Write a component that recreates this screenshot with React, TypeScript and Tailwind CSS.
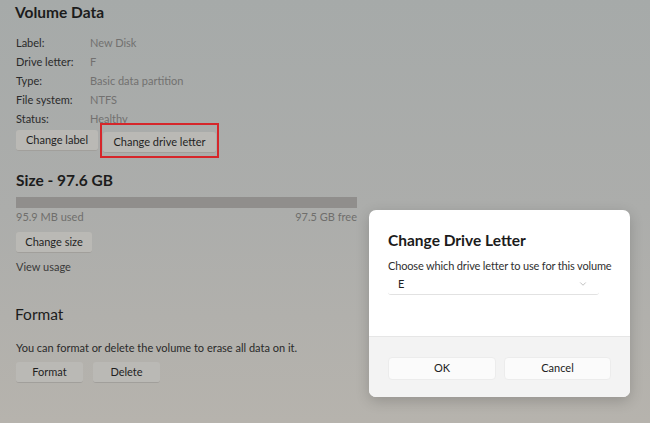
import { ChevronDown } from 'lucide-react'

const rows = [
  ['Label:', 'New Disk'],
  ['Drive letter:', 'F'],
  ['Type:', 'Basic data partition'],
  ['File system:', 'NTFS'],
  ['Status:', 'Healthy'],
]

function GhostButton({ children, className = '' }: { children: React.ReactNode; className?: string }) {
  return (
    <button
      className={`h-[21px] rounded-[3px] border-b border-[#a19f9b] bg-[#bab9b5] text-[11px] text-[#1f1f1f] ${className}`}
    >
      {children}
    </button>
  )
}

export default function App() {
  return (
    <div
      className="relative h-[423px] w-[650px] overflow-hidden bg-gradient-to-b from-[#a6aaa9] via-[#acadab] to-[#b6b3ad] text-[#1c1c1c]"
      style={{ fontFamily: 'Lato, "Open Sans", sans-serif' }}
    >
      <div className="flex w-[357px] flex-col pl-4 pt-[1px]">
        <h1 className="-ml-[1px] text-[15.5px] font-bold leading-[22px]">Volume Data</h1>

        <div className="mt-[12px] flex flex-col gap-[3px] text-[11px]">
          {rows.map(([k, v]) => (
            <div key={k} className="flex h-[16px] items-center">
              <span className="w-[74px] text-[#2a2a2a]">{k}</span>
              <span className="text-[#727170]">{v}</span>
            </div>
          ))}
        </div>

        <div className="mt-[1px] flex items-center gap-[5px]">
          <GhostButton className="w-[82px]">Change label</GhostButton>
          <div className="relative">
            <GhostButton className="w-[113px]">Change drive letter</GhostButton>
            <div className="pointer-events-none absolute -bottom-[5px] -left-[3px] -right-[3px] -top-[5px] border-2 border-[#d6262a]" />
          </div>
        </div>

        <h2 className="mt-[16px] text-[15.5px] font-bold leading-[22px]">Size - 97.6 GB</h2>
        <div className="mt-[6px] h-[11px] w-full bg-[#908e8c]" />
        <div className="mt-[1px] flex justify-between text-[11px] leading-[16px] text-[#6f6e6c]">
          <span>95.9 MB used</span>
          <span>97.5 GB free</span>
        </div>
        <GhostButton className="mt-[7px] w-[76px]">Change size</GhostButton>
        <a className="mt-[6px] text-[11px] leading-[16px] text-[#3a3a3a]">View usage</a>

        <h2 className="mt-[28px] -ml-[1px] text-[15.5px] font-normal leading-[22px]">Format</h2>
        <p className="mt-[15px] text-[11px] leading-[16px] text-[#2a2a2a]">
          You can format or delete the volume to erase all data on it.
        </p>
        <div className="mt-[6px] flex gap-[10px]">
          <GhostButton className="w-[67px]">Format</GhostButton>
          <GhostButton className="w-[67px]">Delete</GhostButton>
        </div>
      </div>

      {/* dialog */}
      <div className="absolute left-[369px] top-[210px] flex h-[187px] w-[261px] flex-col overflow-hidden rounded-[7px] bg-white shadow-[0_4px_14px_rgba(0,0,0,0.18)]">
        <div className="flex-1 px-[19px] pt-[19px]">
          <h3 className="text-[15.5px] font-bold leading-[22px] text-[#1b1b1b]">Change Drive Letter</h3>
          <p className="mt-[7px] whitespace-nowrap text-[11px] leading-[16px] tracking-[-0.15px] text-[#303030]">
            Choose which drive letter to use for this volume
          </p>
          <div className="flex h-[21px] w-[211px] items-center justify-between rounded-[3px] border-b border-[#e2e2e2] bg-white pl-[10px] pr-[11px] text-[11px] text-[#222]">
            <span>E</span>
            <ChevronDown className="h-[10px] w-[10px] text-[#9a9a9a]" strokeWidth={1.5} />
          </div>
        </div>
        <div className="flex h-[61px] items-center gap-[8px] border-t border-[#e6e6e6] bg-[#f3f3f3] pl-[19px] pt-[2px]">
          <button className="h-[23px] w-[108px] rounded-[4px] border border-[#ececec] bg-[#fbfbfb] text-[11px] text-[#222]">
            OK
          </button>
          <button className="h-[23px] w-[107px] rounded-[4px] border border-[#ececec] bg-[#fbfbfb] text-[11px] text-[#222]">
            Cancel
          </button>
        </div>
      </div>
    </div>
  )
}
